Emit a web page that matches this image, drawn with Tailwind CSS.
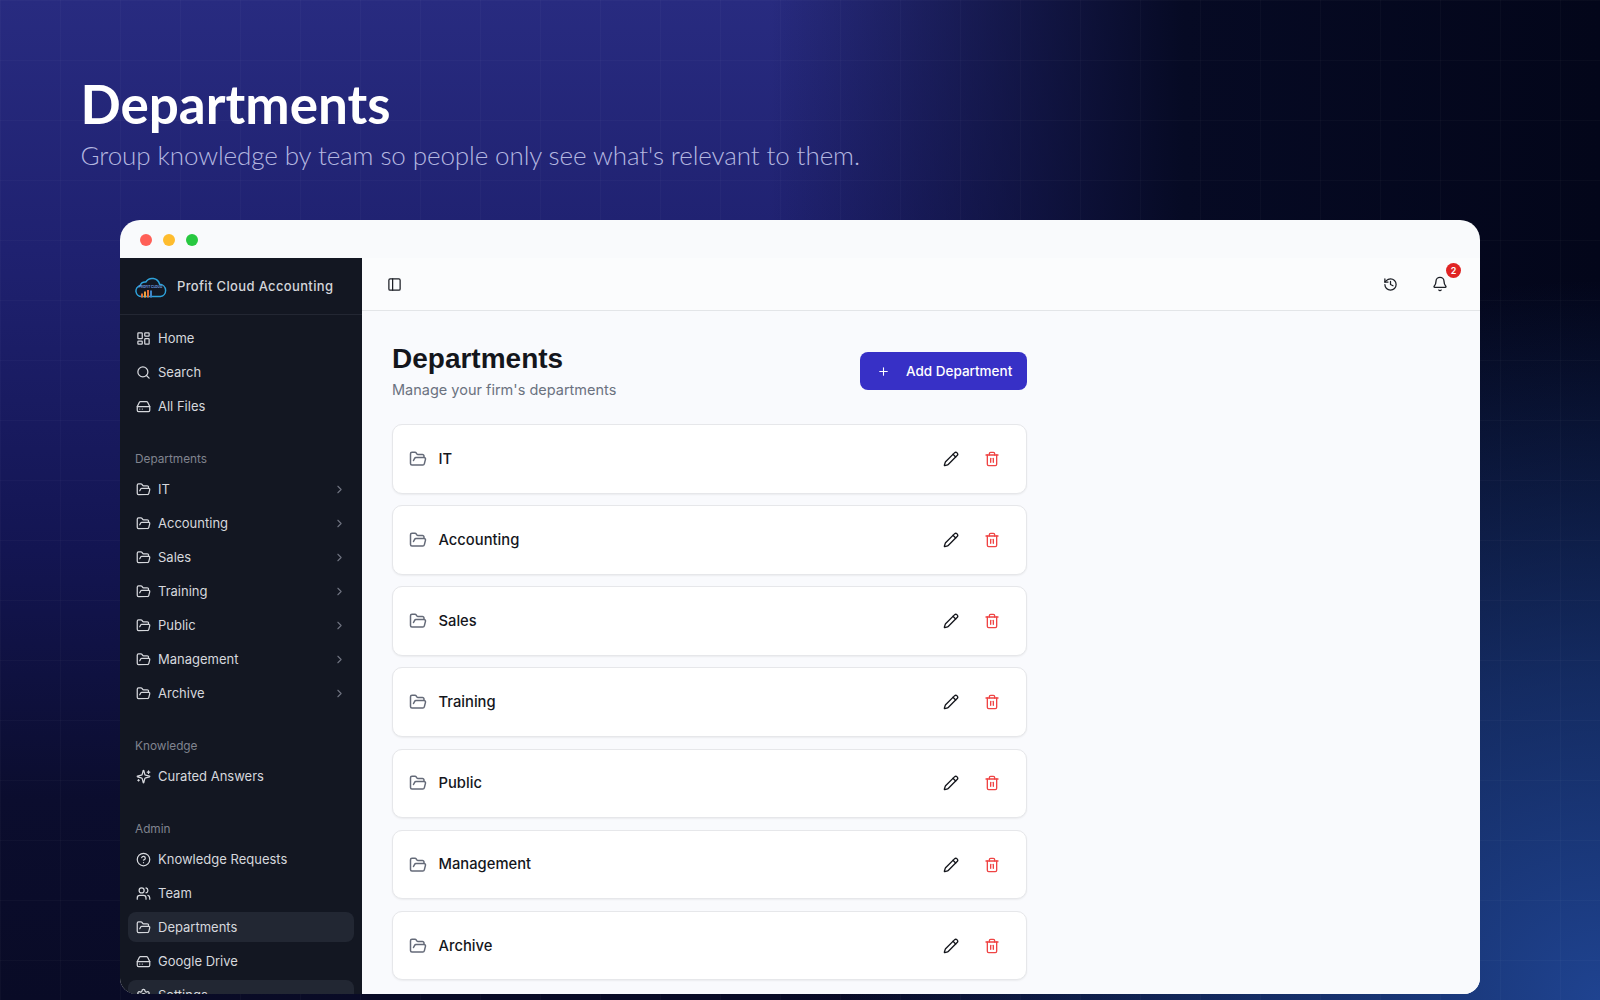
<!DOCTYPE html>
<html lang="en">
<head>
    <meta charset="UTF-8">
    <title>Departments</title>
    <script src="https://cdn.jsdelivr.net/npm/@tailwindcss/browser@4"></script>
</head>
<body class="bg-[#070b26]">
    <svg width="0" height="0" class="absolute">
        <defs>
            <symbol id="folder" viewBox="0 0 24 24" fill="none" stroke="currentColor" stroke-width="2" stroke-linecap="round" stroke-linejoin="round">
                <path d="m6 14 1.5-2.9A2 2 0 0 1 9.24 10H20a2 2 0 0 1 1.94 2.5l-1.54 6a2 2 0 0 1-1.95 1.5H4a2 2 0 0 1-2-2V5a2 2 0 0 1 2-2h3.9a2 2 0 0 1 1.69.9l.81 1.2a2 2 0 0 0 1.67.9H18a2 2 0 0 1 2 2v2"/>
            </symbol>
            <symbol id="chevron" viewBox="0 0 24 24" fill="none" stroke="currentColor" stroke-width="2" stroke-linecap="round" stroke-linejoin="round">
                <path d="m9 18 6-6-6-6"/>
            </symbol>
            <symbol id="drive" viewBox="0 0 24 24" fill="none" stroke="currentColor" stroke-width="2" stroke-linecap="round" stroke-linejoin="round">
                <path d="M22 12H2"/>
                <path d="M5.45 5.11 2 12v6a2 2 0 0 0 2 2h16a2 2 0 0 0 2-2v-6l-3.45-6.89A2 2 0 0 0 16.76 4H7.24a2 2 0 0 0-1.79 1.11z"/>
                <path d="M6 16h.01"/>
                <path d="M10 16h.01"/>
            </symbol>
            <symbol id="pencil" viewBox="0 0 24 24" fill="none" stroke="currentColor" stroke-width="2" stroke-linecap="round" stroke-linejoin="round">
                <path d="M21.17 6.81a2.82 2.82 0 0 0-3.99-3.99L3.84 16.17a2 2 0 0 0-.5.83l-1.32 4.35a.5.5 0 0 0 .62.62l4.35-1.32a2 2 0 0 0 .83-.5z"/>
                <path d="m15 5 4 4"/>
            </symbol>
            <symbol id="trash" viewBox="0 0 24 24" fill="none" stroke="currentColor" stroke-width="2" stroke-linecap="round" stroke-linejoin="round">
                <path d="M3 6h18"/>
                <path d="M19 6v14a2 2 0 0 1-2 2H7a2 2 0 0 1-2-2V6"/>
                <path d="M8 6V4a2 2 0 0 1 2-2h4a2 2 0 0 1 2 2v2"/>
                <path d="M10 11v6"/>
                <path d="M14 11v6"/>
            </symbol>
        </defs>
    </svg>

    <div class="relative w-[1600px] h-[1000px] overflow-hidden font-['Lato','Noto_Sans',sans-serif] bg-[linear-gradient(180deg,#282b80_0%,#1f2170_25%,#131552_55%,#0b0d2e_80%,#090b26_100%)]">
        <!-- background washes -->
        <div class="absolute inset-0 bg-[linear-gradient(90deg,rgba(7,10,36,0)_48%,#060a24_74%,#03061a_100%)]"></div>
        <div class="absolute inset-0 bg-[radial-gradient(ellipse_760px_720px_at_100%_100%,#1f4390_0%,rgba(31,67,144,0.6)_45%,rgba(31,67,144,0)_100%)]"></div>
        <div class="absolute inset-0 bg-[linear-gradient(rgba(255,255,255,0.025)_1px,transparent_1px),linear-gradient(90deg,rgba(255,255,255,0.025)_1px,transparent_1px)] bg-[size:60px_60px]"></div>

        <div class="relative pl-[80.5px] pt-[74px] h-[220px]">
            <h1 class="text-[53px] leading-[60px] font-bold text-white">Departments</h1>
            <p class="text-[26px] leading-[36px] font-light text-[#b4b7e0] mt-[3px] tracking-[-0.1px]">Group knowledge by team so people only see what's relevant to them.</p>
        </div>

        <!-- app window -->
        <div class="relative ml-[120px] w-[1360px] h-[774px] rounded-t-[20px] rounded-b-[16px] overflow-hidden bg-[#f9fafc] font-['Inter','Noto_Sans',sans-serif]">
            <div class="h-[38px] flex items-center pl-[20px] pt-[1px] gap-[11px]">
                <span class="w-3 h-3 rounded-full bg-[#ff5f57]"></span>
                <span class="w-3 h-3 rounded-full bg-[#febc2e]"></span>
                <span class="w-3 h-3 rounded-full bg-[#28c840]"></span>
            </div>
            <div class="flex h-[736px]">
                <aside class="w-[242px] shrink-0 bg-[#131722] text-[#d6d8dd] text-[13px] overflow-hidden">
                    <div class="h-[57px] flex items-center pl-[15px] pt-[1px] border-b border-[#232733]">
                        <svg class="w-[32px] h-[24px]" viewBox="0 0 32 24" fill="none">
                            <path d="M6.5 21.5A5.5 5.5 0 0 1 5 10.7 5.6 5.6 0 0 1 10.8 7 7.6 7.6 0 0 1 24.6 9.2 6.2 6.2 0 0 1 25.5 21.5z" stroke="#2ea3dc" stroke-width="1.5" stroke-linejoin="round"/>
                            <text x="15.5" y="13.4" text-anchor="middle" font-size="3.2" font-weight="700" fill="#6f9fe0" font-family="Inter, sans-serif">PROFIT CLOUD</text>
                            <rect x="6" y="18.5" width="2" height="4" fill="#e2713a"/>
                            <rect x="9" y="16.5" width="2" height="6" fill="#f0a03c"/>
                            <rect x="12" y="15" width="2" height="7.5" fill="#e2713a"/>
                            <rect x="15" y="15.5" width="2" height="7" fill="#3f86c9"/>
                        </svg>
                        <span class="ml-[10px] font-medium text-[#d3d5da] tracking-[0.35px] text-[13px]">Profit Cloud Accounting</span>
                    </div>

                    <nav class="px-2 pt-[6px] [&_a]:pt-[1px]">
                        <a class="flex items-center h-[34px] pl-2 gap-[7px]">
                            <svg class="w-[15px] h-[15px]" viewBox="0 0 24 24" fill="none" stroke="currentColor" stroke-width="2" stroke-linecap="round" stroke-linejoin="round"><rect width="7" height="9" x="3" y="3" rx="1"/><rect width="7" height="5" x="14" y="3" rx="1"/><rect width="7" height="9" x="14" y="12" rx="1"/><rect width="7" height="5" x="3" y="16" rx="1"/></svg>
                            Home
                        </a>
                        <a class="flex items-center h-[34px] pl-2 gap-[7px]">
                            <svg class="w-[15px] h-[15px]" viewBox="0 0 24 24" fill="none" stroke="currentColor" stroke-width="2" stroke-linecap="round" stroke-linejoin="round"><circle cx="11" cy="11" r="8"/><path d="m21 21-4.3-4.3"/></svg>
                            Search
                        </a>
                        <a class="flex items-center h-[34px] pl-2 gap-[7px]">
                            <svg class="w-[15px] h-[15px]"><use href="#drive"/></svg>
                            All Files
                        </a>

                        <div class="pl-[7px] mt-[27px] h-[18px] leading-[18px] text-[11.8px] text-[#80848f]">Departments</div>
                        <div class="mt-[4px]">
                            <a class="flex items-center h-[34px] pl-2 pr-[8px] gap-[7px]"><svg class="w-[15px] h-[15px]"><use href="#folder"/></svg>IT<svg class="w-[13px] h-[13px] ml-auto text-[#6f7380]"><use href="#chevron"/></svg></a>
                            <a class="flex items-center h-[34px] pl-2 pr-[8px] gap-[7px]"><svg class="w-[15px] h-[15px]"><use href="#folder"/></svg>Accounting<svg class="w-[13px] h-[13px] ml-auto text-[#6f7380]"><use href="#chevron"/></svg></a>
                            <a class="flex items-center h-[34px] pl-2 pr-[8px] gap-[7px]"><svg class="w-[15px] h-[15px]"><use href="#folder"/></svg>Sales<svg class="w-[13px] h-[13px] ml-auto text-[#6f7380]"><use href="#chevron"/></svg></a>
                            <a class="flex items-center h-[34px] pl-2 pr-[8px] gap-[7px]"><svg class="w-[15px] h-[15px]"><use href="#folder"/></svg>Training<svg class="w-[13px] h-[13px] ml-auto text-[#6f7380]"><use href="#chevron"/></svg></a>
                            <a class="flex items-center h-[34px] pl-2 pr-[8px] gap-[7px]"><svg class="w-[15px] h-[15px]"><use href="#folder"/></svg>Public<svg class="w-[13px] h-[13px] ml-auto text-[#6f7380]"><use href="#chevron"/></svg></a>
                            <a class="flex items-center h-[34px] pl-2 pr-[8px] gap-[7px]"><svg class="w-[15px] h-[15px]"><use href="#folder"/></svg>Management<svg class="w-[13px] h-[13px] ml-auto text-[#6f7380]"><use href="#chevron"/></svg></a>
                            <a class="flex items-center h-[34px] pl-2 pr-[8px] gap-[7px]"><svg class="w-[15px] h-[15px]"><use href="#folder"/></svg>Archive<svg class="w-[13px] h-[13px] ml-auto text-[#6f7380]"><use href="#chevron"/></svg></a>
                        </div>

                        <div class="pl-[7px] mt-[27px] h-[18px] leading-[18px] text-[11.8px] text-[#80848f]">Knowledge</div>
                        <a class="flex items-center h-[34px] pl-2 gap-[7px] mt-[4px]">
                            <svg class="w-[15px] h-[15px]" viewBox="0 0 24 24" fill="none" stroke="currentColor" stroke-width="2" stroke-linecap="round" stroke-linejoin="round"><path d="M9.94 15.5A2 2 0 0 0 8.5 14.06l-6.14-1.58a.5.5 0 0 1 0-.96L8.5 9.94A2 2 0 0 0 9.94 8.5l1.58-6.14a.5.5 0 0 1 .96 0L14.06 8.5A2 2 0 0 0 15.5 9.94l6.14 1.58a.5.5 0 0 1 0 .96L15.5 14.06a2 2 0 0 0-1.44 1.44l-1.58 6.14a.5.5 0 0 1-.96 0z"/><path d="M20 3v4"/><path d="M22 5h-4"/><path d="M4 17v2"/><path d="M5 18H3"/></svg>
                            Curated Answers
                        </a>

                        <div class="pl-[7px] mt-[27px] h-[18px] leading-[18px] text-[11.8px] text-[#80848f]">Admin</div>
                        <a class="flex items-center h-[34px] pl-2 gap-[7px] mt-[4px]">
                            <svg class="w-[15px] h-[15px]" viewBox="0 0 24 24" fill="none" stroke="currentColor" stroke-width="2" stroke-linecap="round" stroke-linejoin="round"><circle cx="12" cy="12" r="10"/><path d="M9.09 9a3 3 0 0 1 5.83 1c0 2-3 3-3 3"/><path d="M12 17h.01"/></svg>
                            Knowledge Requests
                        </a>
                        <a class="flex items-center h-[34px] pl-2 gap-[7px]">
                            <svg class="w-[15px] h-[15px]" viewBox="0 0 24 24" fill="none" stroke="currentColor" stroke-width="2" stroke-linecap="round" stroke-linejoin="round"><path d="M16 21v-2a4 4 0 0 0-4-4H6a4 4 0 0 0-4 4v2"/><circle cx="9" cy="7" r="4"/><path d="M22 21v-2a4 4 0 0 0-3-3.87"/><path d="M16 3.13a4 4 0 0 1 0 7.75"/></svg>
                            Team
                        </a>
                        <a class="flex items-center h-[30px] my-[2px] pl-2 gap-[7px] bg-[#222733] rounded-lg">
                            <svg class="w-[15px] h-[15px]"><use href="#folder"/></svg>
                            Departments
                        </a>
                        <a class="flex items-center h-[34px] pl-2 gap-[7px]">
                            <svg class="w-[15px] h-[15px]"><use href="#drive"/></svg>
                            Google Drive
                        </a>
                        <a class="flex items-center h-[30px] mt-[2px] pl-2 gap-[7px] bg-[#222733] rounded-lg">
                            <svg class="w-[15px] h-[15px]" viewBox="0 0 24 24" fill="none" stroke="currentColor" stroke-width="2" stroke-linecap="round" stroke-linejoin="round"><path d="M12.22 2h-.44a2 2 0 0 0-2 2v.18a2 2 0 0 1-1 1.73l-.43.25a2 2 0 0 1-2 0l-.15-.08a2 2 0 0 0-2.73.73l-.22.38a2 2 0 0 0 .73 2.73l.15.1a2 2 0 0 1 1 1.72v.51a2 2 0 0 1-1 1.74l-.15.09a2 2 0 0 0-.73 2.73l.22.38a2 2 0 0 0 2.73.73l.15-.08a2 2 0 0 1 2 0l.43.25a2 2 0 0 1 1 1.73V20a2 2 0 0 0 2 2h.44a2 2 0 0 0 2-2v-.18a2 2 0 0 1 1-1.73l.43-.25a2 2 0 0 1 2 0l.15.08a2 2 0 0 0 2.73-.73l.22-.39a2 2 0 0 0-.73-2.73l-.15-.08a2 2 0 0 1-1-1.74v-.5a2 2 0 0 1 1-1.74l.15-.09a2 2 0 0 0 .73-2.73l-.22-.38a2 2 0 0 0-2.73-.73l-.15.08a2 2 0 0 1-2 0l-.43-.25a2 2 0 0 1-1-1.73V4a2 2 0 0 0-2-2z"/><circle cx="12" cy="12" r="3"/></svg>
                            Settings
                        </a>
                    </nav>
                </aside>

                <main class="flex-1 min-w-0 bg-[#f9fafd]">
                    <div class="h-[53px] flex items-center border-b border-[#e3e5e8] bg-[#fbfcfd] pl-[24.5px] pr-[32px] text-[#1c1f26]">
                        <svg class="w-[15px] h-[15px]" viewBox="0 0 24 24" fill="none" stroke="currentColor" stroke-width="2" stroke-linecap="round" stroke-linejoin="round"><rect width="18" height="18" x="3" y="3" rx="2"/><path d="M9 3v18"/></svg>
                        <svg class="w-[15px] h-[15px] ml-auto" viewBox="0 0 24 24" fill="none" stroke="currentColor" stroke-width="2" stroke-linecap="round" stroke-linejoin="round"><path d="M3 12a9 9 0 1 0 9-9 9.75 9.75 0 0 0-6.74 2.74L3 8"/><path d="M3 3v5h5"/><path d="M12 7v5l4 2"/></svg>
                        <div class="relative ml-[34px]">
                            <svg class="w-[16px] h-[16px] block" viewBox="0 0 24 24" fill="none" stroke="currentColor" stroke-width="2" stroke-linecap="round" stroke-linejoin="round"><path d="M10.268 21a2 2 0 0 0 3.464 0"/><path d="M3.262 15.326A1 1 0 0 0 4 17h16a1 1 0 0 0 .74-1.673C19.41 13.956 18 12.499 18 8A6 6 0 0 0 6 8c0 4.499-1.411 5.956-2.738 7.326"/></svg>
                            <span class="absolute left-[14px] top-[-13px] w-[15px] h-[15px] rounded-full bg-[#e02424] text-white text-[9px] font-semibold leading-[15px] text-center">2</span>
                        </div>
                    </div>

                    <div class="w-[635px] ml-[30px] pt-[31px]">
                        <div class="flex items-start justify-between h-[82px]">
                            <div>
                                <h2 class="text-[28px] leading-[34px] font-bold text-[#14161c] font-['Liberation_Sans','Inter',sans-serif]">Departments</h2>
                                <p class="text-[14.5px] leading-[22px] mt-[3px] text-[#6b7280]">Manage your firm's departments</p>
                            </div>
                            <button class="mt-[10px] w-[167px] h-[38px] flex items-center pl-[17px] gap-[16px] rounded-lg bg-[#3730c6] text-white text-[13.5px] font-medium">
                                <svg class="w-[13px] h-[13px]" viewBox="0 0 24 24" fill="none" stroke="currentColor" stroke-width="2" stroke-linecap="round"><path d="M5 12h14"/><path d="M12 5v14"/></svg>
                                Add Department
                            </button>
                        </div>

                        <div class="flex flex-col gap-[11.67px]">
                            <div class="h-[69.5px] flex items-center pl-[15.5px] pr-[26.5px] bg-white border border-[#e6e7ea] rounded-[10px] shadow-[0_1px_2px_rgba(0,0,0,0.06)]"><svg class="w-[18px] h-[18px] text-[#646a78]"><use href="#folder"/></svg><span class="ml-[12px] text-[14.75px] font-medium text-[#14161c]">IT</span><svg class="w-4 h-4 ml-auto text-[#14161c]"><use href="#pencil"/></svg><svg class="w-4 h-4 ml-[25px] text-[#ef4444]"><use href="#trash"/></svg></div>
                            <div class="h-[69.5px] flex items-center pl-[15.5px] pr-[26.5px] bg-white border border-[#e6e7ea] rounded-[10px] shadow-[0_1px_2px_rgba(0,0,0,0.06)]"><svg class="w-[18px] h-[18px] text-[#646a78]"><use href="#folder"/></svg><span class="ml-[12px] text-[14.75px] font-medium text-[#14161c]">Accounting</span><svg class="w-4 h-4 ml-auto text-[#14161c]"><use href="#pencil"/></svg><svg class="w-4 h-4 ml-[25px] text-[#ef4444]"><use href="#trash"/></svg></div>
                            <div class="h-[69.5px] flex items-center pl-[15.5px] pr-[26.5px] bg-white border border-[#e6e7ea] rounded-[10px] shadow-[0_1px_2px_rgba(0,0,0,0.06)]"><svg class="w-[18px] h-[18px] text-[#646a78]"><use href="#folder"/></svg><span class="ml-[12px] text-[14.75px] font-medium text-[#14161c]">Sales</span><svg class="w-4 h-4 ml-auto text-[#14161c]"><use href="#pencil"/></svg><svg class="w-4 h-4 ml-[25px] text-[#ef4444]"><use href="#trash"/></svg></div>
                            <div class="h-[69.5px] flex items-center pl-[15.5px] pr-[26.5px] bg-white border border-[#e6e7ea] rounded-[10px] shadow-[0_1px_2px_rgba(0,0,0,0.06)]"><svg class="w-[18px] h-[18px] text-[#646a78]"><use href="#folder"/></svg><span class="ml-[12px] text-[14.75px] font-medium text-[#14161c]">Training</span><svg class="w-4 h-4 ml-auto text-[#14161c]"><use href="#pencil"/></svg><svg class="w-4 h-4 ml-[25px] text-[#ef4444]"><use href="#trash"/></svg></div>
                            <div class="h-[69.5px] flex items-center pl-[15.5px] pr-[26.5px] bg-white border border-[#e6e7ea] rounded-[10px] shadow-[0_1px_2px_rgba(0,0,0,0.06)]"><svg class="w-[18px] h-[18px] text-[#646a78]"><use href="#folder"/></svg><span class="ml-[12px] text-[14.75px] font-medium text-[#14161c]">Public</span><svg class="w-4 h-4 ml-auto text-[#14161c]"><use href="#pencil"/></svg><svg class="w-4 h-4 ml-[25px] text-[#ef4444]"><use href="#trash"/></svg></div>
                            <div class="h-[69.5px] flex items-center pl-[15.5px] pr-[26.5px] bg-white border border-[#e6e7ea] rounded-[10px] shadow-[0_1px_2px_rgba(0,0,0,0.06)]"><svg class="w-[18px] h-[18px] text-[#646a78]"><use href="#folder"/></svg><span class="ml-[12px] text-[14.75px] font-medium text-[#14161c]">Management</span><svg class="w-4 h-4 ml-auto text-[#14161c]"><use href="#pencil"/></svg><svg class="w-4 h-4 ml-[25px] text-[#ef4444]"><use href="#trash"/></svg></div>
                            <div class="h-[69.5px] flex items-center pl-[15.5px] pr-[26.5px] bg-white border border-[#e6e7ea] rounded-[10px] shadow-[0_1px_2px_rgba(0,0,0,0.06)]"><svg class="w-[18px] h-[18px] text-[#646a78]"><use href="#folder"/></svg><span class="ml-[12px] text-[14.75px] font-medium text-[#14161c]">Archive</span><svg class="w-4 h-4 ml-auto text-[#14161c]"><use href="#pencil"/></svg><svg class="w-4 h-4 ml-[25px] text-[#ef4444]"><use href="#trash"/></svg></div>
                        </div>
                    </div>
                </main>
            </div>
        </div>
    </div>
</body>
</html>
